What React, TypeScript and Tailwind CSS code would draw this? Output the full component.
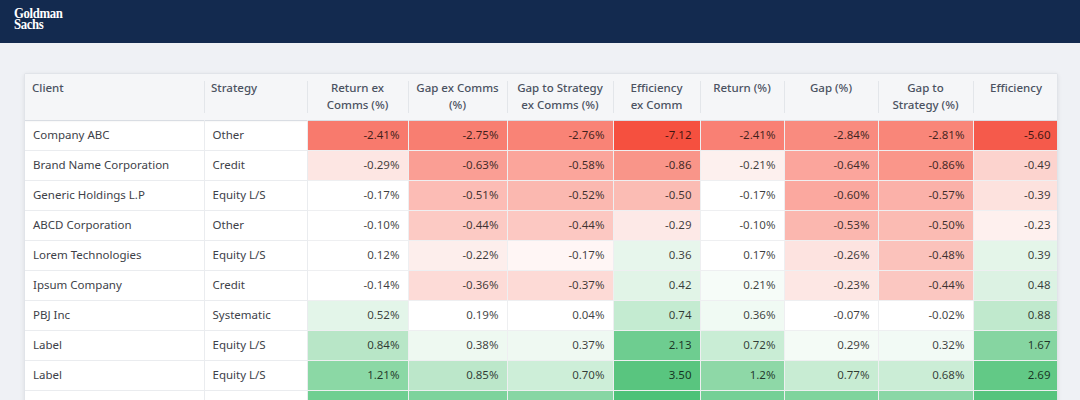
import React from 'react';

type Cell = [string, string];
type Row = { client: string; strategy: string; cells: Cell[] };

const columns = [
  { label: 'Client', width: 'w-[179px]', align: 'text-left px-[7px]' },
  { label: 'Strategy', width: 'w-[103px]', align: 'text-left px-[7px]' },
  { label: 'Return ex Comms (%)', width: 'w-[101px]', align: 'text-center px-[7px]' },
  { label: 'Gap ex Comms (%)', width: 'w-[99px]', align: 'text-center px-[7px]' },
  { label: 'Gap to Strategy ex Comms (%)', width: 'w-[106px]', align: 'text-center px-[7px]' },
  { label: 'Efficiency ex Comm', width: 'w-[87px]', align: 'text-center px-3' },
  { label: 'Return (%)', width: 'w-[84px]', align: 'text-center px-[7px]' },
  { label: 'Gap (%)', width: 'w-[94px]', align: 'text-center px-[7px]' },
  { label: 'Gap to Strategy (%)', width: 'w-[95px]', align: 'text-center px-[7px]' },
  { label: 'Efficiency', width: 'w-[86px]', align: 'text-center px-[7px]' },
];

const rows: Row[] = [
  {
    client: 'Company ABC',
    strategy: 'Other',
    cells: [
      ['-2.41%', 'bg-[#f87a6d]'],
      ['-2.75%', 'bg-[#f87e71]'],
      ['-2.76%', 'bg-[#f98376]'],
      ['-7.12', 'bg-[#f5503f]'],
      ['-2.41%', 'bg-[#f98074]'],
      ['-2.84%', 'bg-[#f98b7f]'],
      ['-2.81%', 'bg-[#f98679]'],
      ['-5.60', 'bg-[#f55a4b]'],
    ],
  },
  {
    client: 'Brand Name Corporation',
    strategy: 'Credit',
    cells: [
      ['-0.29%', 'bg-[#fde6e3]'],
      ['-0.63%', 'bg-[#fa9e94]'],
      ['-0.58%', 'bg-[#fba59b]'],
      ['-0.86', 'bg-[#f99589]'],
      ['-0.21%', 'bg-[#fdf0ee]'],
      ['-0.64%', 'bg-[#fba59c]'],
      ['-0.86%', 'bg-[#fa968a]'],
      ['-0.49', 'bg-[#fcd3ce]'],
    ],
  },
  {
    client: 'Generic Holdings L.P',
    strategy: 'Equity L/S',
    cells: [
      ['-0.17%', 'bg-white'],
      ['-0.51%', 'bg-[#fcbcb5]'],
      ['-0.52%', 'bg-[#fbb8b0]'],
      ['-0.50', 'bg-[#fbbcb4]'],
      ['-0.17%', 'bg-white'],
      ['-0.60%', 'bg-[#fba89f]'],
      ['-0.57%', 'bg-[#fbb1a9]'],
      ['-0.39', 'bg-[#fde2de]'],
    ],
  },
  {
    client: 'ABCD Corporation',
    strategy: 'Other',
    cells: [
      ['-0.10%', 'bg-white'],
      ['-0.44%', 'bg-[#fccac4]'],
      ['-0.44%', 'bg-[#fcc8c2]'],
      ['-0.29', 'bg-[#fde9e7]'],
      ['-0.10%', 'bg-white'],
      ['-0.53%', 'bg-[#fbb7af]'],
      ['-0.50%', 'bg-[#fbbbb3]'],
      ['-0.23', 'bg-[#fef0ee]'],
    ],
  },
  {
    client: 'Lorem Technologies',
    strategy: 'Equity L/S',
    cells: [
      ['0.12%', 'bg-white'],
      ['-0.22%', 'bg-[#fdeeec]'],
      ['-0.17%', 'bg-[#fff6f5]'],
      ['0.36', 'bg-[#e7f6ec]'],
      ['0.17%', 'bg-white'],
      ['-0.26%', 'bg-[#fde3e0]'],
      ['-0.48%', 'bg-[#fbc2bb]'],
      ['0.39', 'bg-[#e4f5e9]'],
    ],
  },
  {
    client: 'Ipsum Company',
    strategy: 'Credit',
    cells: [
      ['-0.14%', 'bg-white'],
      ['-0.36%', 'bg-[#fddbd7]'],
      ['-0.37%', 'bg-[#fddad6]'],
      ['0.42', 'bg-[#e1f4e7]'],
      ['0.21%', 'bg-[#f6fcf8]'],
      ['-0.23%', 'bg-[#fde7e4]'],
      ['-0.44%', 'bg-[#fbc7c1]'],
      ['0.48', 'bg-[#dcf2e3]'],
    ],
  },
  {
    client: 'PBJ Inc',
    strategy: 'Systematic',
    cells: [
      ['0.52%', 'bg-[#e3f5e9]'],
      ['0.19%', 'bg-white'],
      ['0.04%', 'bg-white'],
      ['0.74', 'bg-[#c4ebd1]'],
      ['0.36%', 'bg-[#f0faf3]'],
      ['-0.07%', 'bg-white'],
      ['-0.02%', 'bg-white'],
      ['0.88', 'bg-[#c0e9cd]'],
    ],
  },
  {
    client: 'Label',
    strategy: 'Equity L/S',
    cells: [
      ['0.84%', 'bg-[#b8e6c7]'],
      ['0.38%', 'bg-[#eef9f1]'],
      ['0.37%', 'bg-[#eff9f2]'],
      ['2.13', 'bg-[#6ecd90]'],
      ['0.72%', 'bg-[#c9edd5]'],
      ['0.29%', 'bg-[#f4fbf6]'],
      ['0.32%', 'bg-[#f2faf5]'],
      ['1.67', 'bg-[#86d5a1]'],
    ],
  },
  {
    client: 'Label',
    strategy: 'Equity L/S',
    cells: [
      ['1.21%', 'bg-[#8bd8a5]'],
      ['0.85%', 'bg-[#bce7ca]'],
      ['0.70%', 'bg-[#cdeed8]'],
      ['3.50', 'bg-[#59c57f]'],
      ['1.2%', 'bg-[#8ed8a7]'],
      ['0.77%', 'bg-[#c8ecd3]'],
      ['0.68%', 'bg-[#cbedd6]'],
      ['2.69', 'bg-[#62c986]'],
    ],
  },
  {
    client: 'Label',
    strategy: 'Systematic',
    cells: [
      ['1.45%', 'bg-[#6fcf91]'],
      ['1.12%', 'bg-[#7dd39c]'],
      ['0.98%', 'bg-[#87d6a4]'],
      ['4.21', 'bg-[#4cc278]'],
      ['1.41%', 'bg-[#74d096]'],
      ['1.05%', 'bg-[#7fd49d]'],
      ['0.94%', 'bg-[#8ad7a6]'],
      ['3.12', 'bg-[#55c47d]'],
    ],
  },
];

const App: React.FC = () => {
  return (
    <div className="min-h-screen bg-[#eff1f5] font-['Noto_Sans',sans-serif]">
      {/* Top bar */}
      <div className="h-[43px] bg-[#132a4f] flex items-start pl-[14px] pt-[8px]">
        <div className="origin-left scale-x-[0.88] font-['Liberation_Serif',serif] font-bold text-white text-[14.5px] leading-[11px] tracking-[-0.4px]">
          <div>Goldman</div>
          <div>Sachs</div>
        </div>
      </div>

      {/* Heatmap table */}
      <div className="pl-6 pr-[22px] pt-[30px]">
        <div className="bg-white border border-[#e1e4e9] rounded-[2px] shadow-[0_1px_4px_rgba(0,0,0,0.08)] overflow-hidden">
          <table className="w-full table-fixed border-collapse text-[11.5px]">
            <colgroup>
              {columns.map((col) => (
                <col key={col.label} className={col.width} />
              ))}
            </colgroup>
            <thead>
              <tr className="bg-[#f5f6f8] border-b border-[#d9dde3] shadow-[0_1px_2px_rgba(0,0,0,0.08)]">
                {columns.map((col, i) => (
                  <th
                    key={col.label}
                    className={`relative h-[46px] align-top pt-[5px] font-medium leading-[17px] text-[#4b5261] ${col.align}`}
                  >
                    {i > 0 && (
                      <span className="absolute left-0 top-[7px] bottom-[7px] w-px bg-[#e3e6ea]" />
                    )}
                    {col.label}
                  </th>
                ))}
              </tr>
            </thead>
            <tbody>
              {rows.map((row, r) => (
                <tr key={r} className="h-[30px]">
                  <td className="px-2 text-[#3d4148] border-b border-r border-[#eaecef] whitespace-nowrap">
                    {row.client}
                  </td>
                  <td className="px-2 text-[#3d4148] border-b border-r border-[#eaecef] whitespace-nowrap">
                    {row.strategy}
                  </td>
                  {row.cells.map(([value, bg], c) => (
                    <td
                      key={c}
                      className={`px-2 text-right text-black/75 border-b border-r border-[#eeeff1] ${bg}`}
                    >
                      {value}
                    </td>
                  ))}
                </tr>
              ))}
            </tbody>
          </table>
        </div>
      </div>
    </div>
  );
};

export default App;
